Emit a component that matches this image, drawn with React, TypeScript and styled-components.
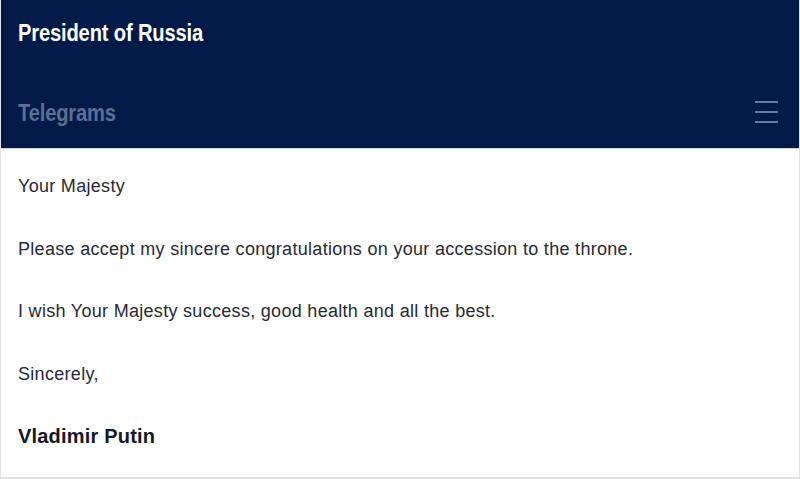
import React from "react";
import styled, { createGlobalStyle } from "styled-components";

const Global = createGlobalStyle`
  html, body { margin: 0; padding: 0; background: #ffffff; }
  #root { width: 800px; height: 479px; }
`;

const Frame = styled.div`
  box-sizing: border-box;
  width: 800px;
  height: 479px;
  display: flex;
  flex-direction: column;
  border-left: 1px solid #e4e4e4;
  border-right: 1px solid #e4e4e4;
  border-bottom: 2px solid #e2e2e2;
  overflow: hidden;
`;

const Header = styled.header`
  flex-shrink: 0;
  background: #021a48;
  height: 149px;
  box-sizing: border-box;
  display: flex;
  flex-direction: column;
  padding: 0 21px 0 17px;
  border-bottom: 1px solid #c9d3e2;
`;

const Title = styled.div`
  height: 66px;
  display: flex;
  align-items: center;
`;

const Condensed = styled.span<{ $color: string }>`
  display: inline-block;
  font-family: "Liberation Sans", Arial, sans-serif;
  font-weight: bold;
  font-size: 24px;
  color: ${(p) => p.$color};
  letter-spacing: -0.2px;
  transform: scaleX(0.84);
  transform-origin: left center;
  white-space: nowrap;
`;

const SubBar = styled.div`
  flex: 1;
  display: flex;
  align-items: center;
  justify-content: space-between;
  padding-top: 12px;
`;

const Burger = styled.div`
  width: 23px;
  display: flex;
  flex-direction: column;
  gap: 8px;
  margin-bottom: 3px;
  span {
    display: block;
    height: 2px;
    background: #66789d;
  }
`;

const Body = styled.main`
  flex: 1;
  padding: 27px 17px 0 17px;
  display: flex;
  flex-direction: column;
`;

const Para = styled.p<{ $strong?: boolean }>`
  margin: 0;
  height: 62.5px;
  font-family: "Liberation Sans", Arial, sans-serif;
  font-size: ${(p) => (p.$strong ? "20px" : "18px")};
  font-weight: ${(p) => (p.$strong ? "bold" : "normal")};
  color: ${(p) => (p.$strong ? "#141824" : "#262b33")};
  letter-spacing: ${(p) => (p.$strong ? "0.2px" : "0.3px")};
  line-height: 20px;
`;

export default function App() {
  return (
    <>
      <Global />
      <Frame>
        <Header>
          <Title>
            <Condensed $color="#ffffff">President of Russia</Condensed>
          </Title>
          <SubBar>
            <Condensed $color="#5b6f96">Telegrams</Condensed>
            <Burger>
              <span />
              <span />
              <span />
            </Burger>
          </SubBar>
        </Header>
        <Body>
          <Para>Your Majesty</Para>
          <Para>Please accept my sincere congratulations on your accession to the throne.</Para>
          <Para>I wish Your Majesty success, good health and all the best.</Para>
          <Para>Sincerely,</Para>
          <Para $strong>Vladimir Putin</Para>
        </Body>
      </Frame>
    </>
  );
}
